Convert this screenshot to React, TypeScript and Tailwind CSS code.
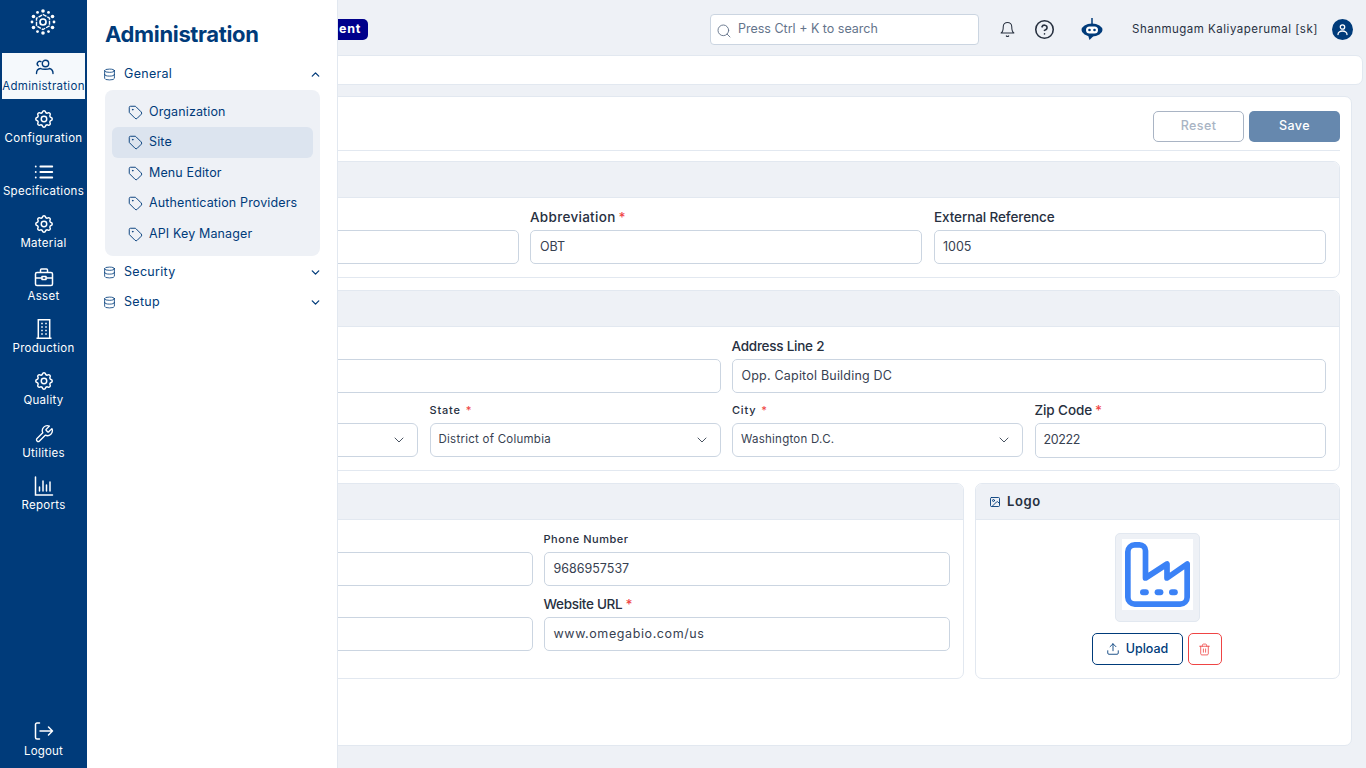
import React from "react";
import {
  LuList, LuWrench, LuDatabase, LuTag, LuChevronUp, LuChevronDown, LuBell,
  LuCircleHelp, LuSearch, LuUpload, LuTrash2, LuImage,
} from "react-icons/lu";
import { TbSettings } from "react-icons/tb";

const Chart = () => (
  <svg width="22" height="22" viewBox="0 0 22 22" fill="none" stroke="currentColor" strokeWidth="1.5" strokeLinecap="round">
    <path d="M2.5 2v18h17" />
    <path d="M6.5 16v-4M10 16V6M13.5 16v-6M17 16V7" />
  </svg>
);

const LogoutIcon = () => (
  <svg width="22" height="22" viewBox="0 0 22 22" fill="none" stroke="currentColor" strokeWidth="1.5" strokeLinecap="round" strokeLinejoin="round">
    <path d="M6.5 3H4a1.5 1.5 0 0 0-1.5 1.5v13A1.5 1.5 0 0 0 4 19h2.5" />
    <path d="M7 11h12.5M15.5 7l4 4-4 4" />
  </svg>
);

const AdminIcon = () => (
  <svg width="20" height="16" viewBox="0 0 20 16" fill="none" stroke="currentColor" strokeWidth="1.4" strokeLinecap="round">
    <circle cx="11.5" cy="4.5" r="3.2" />
    <path d="M2.5 14.5a4.5 5 0 0 1 4-5c1.5 1 8 1 9 0a4.5 5 0 0 1 3.5 5" />
    <path d="M7 2.6a2.5 2.5 0 0 0-2.7 4.2" />
  </svg>
);

const BriefcaseIcon = () => (
  <svg width="22" height="22" viewBox="0 0 22 22" fill="none" stroke="currentColor" strokeWidth="1.5" strokeLinejoin="round">
    <rect x="2.5" y="6.5" width="17" height="13" rx="1.5" />
    <path d="M7.5 6.5V4a1 1 0 0 1 1-1h5a1 1 0 0 1 1 1v2.5" />
    <path d="M2.5 12h6.5M13 12h6.5" />
    <rect x="9" y="10.5" width="4" height="3" />
  </svg>
);

const BuildingIcon = () => (
  <svg width="22" height="22" viewBox="0 0 22 22" fill="none" stroke="currentColor" strokeWidth="1.5">
    <path d="M3.5 20.3h15M5.3 20.3V1.8h11.4v18.5" />
    <path d="M8.2 5.5h1.6M12.2 5.5h1.6M8.2 9h1.6M12.2 9h1.6M8.2 12.5h1.6M12.2 12.5h1.6M8.2 16h1.6M12.2 16h1.6" strokeWidth="1.7" />
  </svg>
);

const BrandLogo = () => {
  const outer = Array.from({ length: 12 }, (_, i) => (i * Math.PI) / 6 + Math.PI / 2);
  return (
    <svg width="26" height="26" viewBox="0 0 26 26" fill="none" stroke="white">
      <polygon points="13,5.5 19.5,9.2 19.5,16.8 13,20.5 6.5,16.8 6.5,9.2" strokeWidth="1.4" strokeDasharray="4 1" />
      <circle cx="13" cy="13" r="3" strokeWidth="1.7" />
      {outer.map((a, i) => (
        <circle key={i} cx={13 + 11 * Math.cos(a)} cy={13 + 11 * Math.sin(a)} r={i % 2 ? 1.4 : 1.8} fill="white" stroke="none" />
      ))}
    </svg>
  );
};

const Robot = () => (
  <svg width="24" height="26" viewBox="0 0 24 26" fill="none">
    <path d="M12 1v6" stroke="#003b7a" strokeWidth="1.5" />
    <ellipse cx="12" cy="13" rx="10.5" ry="6.5" fill="#003b7a" />
    <path d="M8 18l1.5 5 4-4z" fill="#003b7a" />
    <rect x="6" y="9.5" width="12" height="7" rx="3.5" fill="white" />
    <circle cx="9.5" cy="13" r="1.3" fill="#003b7a" />
    <circle cx="14.5" cy="13" r="1.3" fill="#003b7a" />
  </svg>
);

const Factory = () => (
  <svg width="65" height="65" viewBox="0 0 65 65" fill="none" stroke="#3b82f6" strokeWidth="5.7" strokeLinejoin="round" strokeLinecap="round">
    <path d="M2.85 9.8A7 7 0 0 1 9.8 2.85H14.5A6 6 0 0 1 20.5 8.8V36L42 22V36L62.15 22V55.2A7 7 0 0 1 55.2 62.15H9.8A7 7 0 0 1 2.85 55.2Z" />
    <rect x="15" y="47.2" width="8.8" height="6" rx="3" fill="#3b82f6" stroke="none" />
    <rect x="29.6" y="47.2" width="8.8" height="6" rx="3" fill="#3b82f6" stroke="none" />
    <rect x="44" y="47.2" width="8.8" height="6" rx="3" fill="#3b82f6" stroke="none" />
  </svg>
);

const navItems: [string, React.ReactNode][] = [
  ["Administration", <AdminIcon />],
  ["Configuration", <TbSettings size={22} strokeWidth={1.6} />],
  ["Specifications", <LuList size={22} strokeWidth={2} />],
  ["Material", <TbSettings size={22} strokeWidth={1.6} />],
  ["Asset", <BriefcaseIcon />],
  ["Production", <BuildingIcon />],
  ["Quality", <TbSettings size={22} strokeWidth={1.6} />],
  ["Utilities", <LuWrench size={20} strokeWidth={1.6} />],
  ["Reports", <Chart />],
];

type FieldProps = {
  label?: string;
  value?: string;
  req?: boolean;
  size?: "normal" | "small" | "wide";
  select?: boolean;
  labelClass?: string;
  valueClass?: string;
};

const Label = ({ label, req, size = "normal", labelClass = "" }: FieldProps) => {
  const base =
    size === "normal"
      ? "text-[13.5px] font-medium text-[#27303f] tracking-[-0.1px] "
      : size === "small"
        ? "text-[11px] font-medium text-[#27303f] tracking-[0.55px] "
        : "text-[11px] font-medium text-[#27303f] tracking-[0.8px] ";
  return (
    <div className={"h-[13px] mb-[6px] flex items-center " + base + labelClass}>
      {label}
      {req && <span className={size === "wide" ? "ml-[5px] text-[#ef4444]" : "ml-[3px] text-[#ef4444]"}>*</span>}
    </div>
  );
};

const Field = (p: FieldProps) => (
  <div className="min-w-0">
    <Label {...p} />
    {p.select ? (
      <div className="h-[34px] rounded-[6px] border border-[#cbd5e1] bg-white pl-[8px] pr-[10px] flex items-center justify-between text-[11.5px] text-[#374151] tracking-[0.25px]">
        {p.value}
        <LuChevronDown size={16} strokeWidth={1.5} className="ml-auto text-[#4b5563]" />
      </div>
    ) : (
      <div className={"rounded-[5px] border border-[#cbd5e1] bg-white flex items-center text-[12.5px] text-[#374151] " + (p.valueClass || "h-[34px] px-[9px]")}>
        {p.value}
      </div>
    )}
  </div>
);

const Section = ({ title, icon, className, children }: { title?: string; icon?: React.ReactNode; className: string; children: React.ReactNode }) => (
  <section className={"rounded-[7px] border border-[#e2e8f0] overflow-hidden " + className}>
    <div className="h-[36px] bg-[#eef1f6] border-b border-[#e2e8f0] px-[13px] flex items-center gap-[6px] text-[13px] font-semibold tracking-[0.6px] text-[#27303f]">
      {icon}
      {title}
    </div>
    {children}
  </section>
);

export default function App() {
  return (
    <div className="relative flex h-[768px] w-[1366px] overflow-hidden bg-[#eef1f6] [font-family:Inter,'Liberation_Sans',sans-serif]">
      <aside className="w-[87px] shrink-0 bg-[#003b7a] text-white flex flex-col">
        <div className="h-[53px] flex items-center justify-center pb-[9px] pr-[1px]">
          <BrandLogo />
        </div>
        <nav className="flex flex-col gap-[6.4px] px-[2px]">
          {navItems.map(([name, icon], i) => (
            <div
              key={name}
              className={
                "h-[46px] pt-[3px] flex flex-col items-center text-[11.5px] tracking-[0.3px] leading-[14px] whitespace-nowrap " +
                (i === 0 ? "bg-[#f5f9fc] text-[#003b7a]" : "text-white")
              }
            >
              <div className="h-[22px] mb-[1px] flex items-center justify-center">{icon}</div>
              {name}
            </div>
          ))}
        </nav>
        <div className="mt-auto mb-[10px] flex flex-col items-center gap-[2px] text-[11.5px] tracking-[0.2px] leading-[14px]">
          <LogoutIcon />
          Logout
        </div>
      </aside>

      <main className="flex-1 min-w-0 flex flex-col">
        <header className="h-[55px] shrink-0 flex items-center pt-[4px]">
          <div className="w-[281px] flex justify-end">
            <span className="h-[21px] pl-[12px] pr-[7px] rounded-[5px] bg-[#00008b] text-white text-[12.5px] font-bold tracking-[0.7px] flex items-center">
              ent
            </span>
          </div>
          <div className="ml-[342px] w-[269px] h-[31px] rounded-[4px] border border-[#cbd5e1] bg-white flex items-center pl-[5px] gap-[6px] text-[12.5px] text-[#64748b]">
            <LuSearch size={16} strokeWidth={1.4} className="mt-[3px]" />
            Press Ctrl + K to search
          </div>
          <LuBell size={17} strokeWidth={1.5} className="ml-[20px] text-[#27303f]" />
          <LuCircleHelp size={21} strokeWidth={1.8} className="ml-[18px] text-[#27303f]" />
          <div className="ml-[25px]">
            <Robot />
          </div>
          <span className="ml-[28px] w-[186px] text-[11.5px] tracking-[0.5px] text-[#27303f] whitespace-nowrap">
            Shanmugam Kaliyaperumal [sk]
          </span>
          <div className="ml-[14px] w-[21px] h-[21px] rounded-full bg-[#003b7a] flex items-center justify-center">
            <svg width="13" height="13" viewBox="0 0 13 13" fill="none" stroke="white" strokeWidth="1.3" strokeLinecap="round">
              <circle cx="6.5" cy="4" r="2.2" />
              <path d="M2 11.5a4.5 3.5 0 0 1 9 0" />
            </svg>
          </div>
        </header>

        <div className="h-[30px] shrink-0 ml-[12px] mr-[3px] rounded-[7px] border border-[#e2e8f0] bg-white" />

        <div className="mt-[11px] h-[650px] ml-[13px] mr-[14px] rounded-[7px] border border-[#e2e8f0] bg-white px-[11px] flex flex-col">
          <div className="h-[54px] shrink-0 border-b border-[#e2e8f0] flex items-center justify-end gap-[5px] pt-[5px]">
            <button className="w-[91px] h-[31px] rounded-[5px] border border-[#a9b4c4] text-[#a9b4c4] text-[12.5px] font-medium tracking-[0.4px]">
              Reset
            </button>
            <button className="w-[91px] h-[31px] rounded-[5px] bg-[#6688ae] text-white text-[12.5px] font-medium tracking-[0.4px]">
              Save
            </button>
          </div>

          <Section className="mt-[10px] h-[117px] shrink-0">
            <div className="grid grid-cols-[393px_392px_393px] gap-x-[11px] px-[13px] pt-[13px]">
              <Field />
              <Field label="Abbreviation" value="OBT" req labelClass="tracking-[0.3px]" />
              <div className="ml-[1px]">
                <Field label="External Reference" value="1005" valueClass="h-[34px] pl-[8px]" />
              </div>
            </div>
          </Section>

          <Section className="mt-[12px] h-[181px] shrink-0">
            <div className="px-[13px] pt-[13px]">
              <div className="grid grid-cols-2 gap-x-[11px]">
                <Field />
                <Field label="Address Line 2" value="Opp. Capitol Building DC" labelClass="tracking-[-0.25px]" valueClass="h-[34px] px-[9px] tracking-[0.2px]" />
              </div>
              <div className="grid grid-cols-[291px_291px_291px_291px] gap-x-[11.5px] mt-[11px] ml-[1px]">
                <Field select />
                <Field label="State" value="District of Columbia" size="wide" req select />
                <Field label="City" value="Washington D.C." size="wide" req select />
                <Field label="Zip Code" value="20222" req valueClass="h-[35px] pl-[8px] tracking-[-0.4px]" />
              </div>
            </div>
          </Section>

          <div className="mt-[12px] flex gap-[11px]">
            <Section className="w-[852px] h-[196px]">
              <div className="grid grid-cols-2 gap-x-[11px] gap-y-[12px] px-[13px] pt-[13px]">
                <Field size="small" />
                <Field label="Phone Number" value="9686957537" size="small" />
                <Field />
                <Field label="Website URL" value="www.omegabio.com/us" req labelClass="tracking-[-0.3px]" valueClass="h-[34px] px-[9px] tracking-[0.6px]" />
              </div>
            </Section>
            <Section
              title="Logo"
              icon={<LuImage size={12} strokeWidth={1.8} className="text-[#003b7a]" />}
              className="flex-1 h-[196px]"
            >
              <div className="flex flex-col items-center pt-[13px]">
                <div className="w-[85px] h-[89px] rounded-[5px] border border-[#e2e8f0] bg-[#eef1f6] flex justify-center pt-[5px]">
                  <div className="w-[71px] h-[71px] bg-white flex items-center justify-center">
                    <Factory />
                  </div>
                </div>
                <div className="mt-[11px] mr-[2px] flex gap-[5px]">
                  <button className="w-[91px] h-[32px] rounded-[5px] border border-[#003b7a] text-[#003b7a] text-[12.5px] font-medium flex items-center justify-center gap-[6px]">
                    <LuUpload size={14} strokeWidth={1.5} />
                    Upload
                  </button>
                  <button className="w-[34px] h-[32px] rounded-[5px] border border-[#ef4444] text-[#ef4444] flex items-center justify-center">
                    <LuTrash2 size={13} strokeWidth={1.5} />
                  </button>
                </div>
              </div>
            </Section>
          </div>
        </div>
      </main>

      {/* Flyout panel over the page */}
      <div className="absolute left-[87px] top-0 bottom-0 w-[251px] bg-white border-r border-[#e2e8f0] text-[#003b7a] pl-[16px] pr-[15px]">
        <div className="h-[59px] pt-[9px] pl-[2px] flex items-center text-[22px] font-bold tracking-[-0.35px]">Administration</div>
        <MenuRow name="General" open />
        <div className="mt-[1px] ml-[2px] w-[215px] h-[166px] rounded-[8px] bg-[#eef1f6] p-[7px] flex flex-col">
          {["Organization", "Site", "Menu Editor", "Authentication Providers", "API Key Manager"].map((n, i) => (
            <div
              key={n}
              className={
                "shrink-0 rounded-[6px] pl-[16px] flex items-center gap-[6px] text-[12.5px] tracking-[0.13px] " +
                (i % 2 === 1 ? "h-[31px] " : "h-[30px] ") +
                (n === "Site" ? "bg-[#dce4ef]" : "")
              }
            >
              <LuTag size={15} strokeWidth={1.5} />
              {n}
            </div>
          ))}
        </div>
        <div className="mt-[1px]">
          <MenuRow name="Security" />
          <MenuRow name="Setup" />
        </div>
      </div>
    </div>
  );
}

function MenuRow({ name, open }: { name: string; open?: boolean }) {
  return (
    <div className="h-[30px] flex items-center text-[12.5px] tracking-[0.3px]">
      <LuDatabase size={13} strokeWidth={1.5} />
      <span className="ml-[8px]">{name}</span>
      {open ? (
        <LuChevronUp size={13} strokeWidth={2.4} className="ml-auto" />
      ) : (
        <LuChevronDown size={13} strokeWidth={2.4} className="ml-auto" />
      )}
    </div>
  );
}
